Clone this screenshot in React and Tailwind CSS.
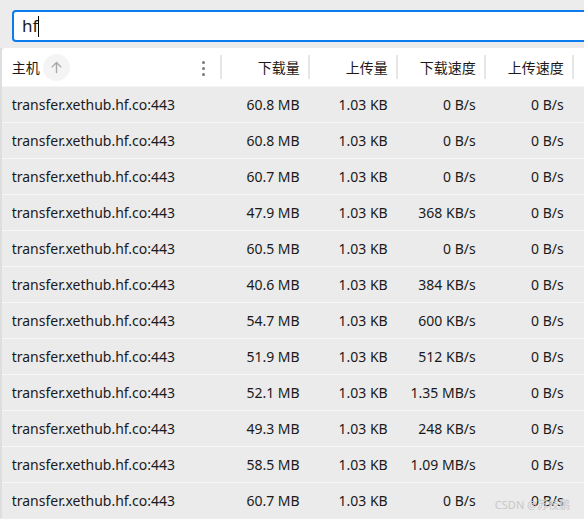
import React from 'react';

const rows = [
  ['60.8 MB', '1.03 KB', '0 B/s', '0 B/s'],
  ['60.8 MB', '1.03 KB', '0 B/s', '0 B/s'],
  ['60.7 MB', '1.03 KB', '0 B/s', '0 B/s'],
  ['47.9 MB', '1.03 KB', '368 KB/s', '0 B/s'],
  ['60.5 MB', '1.03 KB', '0 B/s', '0 B/s'],
  ['40.6 MB', '1.03 KB', '384 KB/s', '0 B/s'],
  ['54.7 MB', '1.03 KB', '600 KB/s', '0 B/s'],
  ['51.9 MB', '1.03 KB', '512 KB/s', '0 B/s'],
  ['52.1 MB', '1.03 KB', '1.35 MB/s', '0 B/s'],
  ['49.3 MB', '1.03 KB', '248 KB/s', '0 B/s'],
  ['58.5 MB', '1.03 KB', '1.09 MB/s', '0 B/s'],
  ['60.7 MB', '1.03 KB', '0 B/s', '0 B/s'],
];

const font = { fontFamily: '"Noto Sans", "Noto Sans CJK SC", sans-serif' };

const HeadCell = ({ children }) => (
  <div className="w-[88px] flex items-center justify-end pr-[10px] relative">
    {children}
    <span className="absolute right-0 top-[7px] bottom-[7px] w-[2px] bg-[#e6e6e6]" />
  </div>
);

export default function App() {
  return (
    <div className="w-[584px] h-[519px] overflow-hidden bg-[#ececec] relative text-[#1a1a1a]" style={font}>
      {/* search */}
      <div className="pt-[10px] pl-[12px]">
        <div className="w-[600px] h-[32px] border-2 border-[#0a7cf0] rounded-[4px] bg-white flex items-center pl-[8px] text-[17px]">
          <span>hf</span>
          <span className="w-px h-[21px] bg-black" />
        </div>
      </div>

      {/* table */}
      <div className="mt-[6px] flex">
        <div className="w-[2px] bg-[#dedede]" />
        <div className="w-[700px]">
          <div className="h-[38px] bg-white rounded-tl-[4px] flex text-[14px]">
            <div className="w-[220px] flex items-center pl-[10px] relative">
              <span>主机</span>
              <span className="ml-[3px] w-[27px] h-[27px] rounded-full bg-[#f4f4f4] flex items-center justify-center">
                <svg width="15" height="15" viewBox="0 0 24 24" fill="none" stroke="#a8a8a8" strokeWidth="2.2" strokeLinecap="round">
                  <path d="M12 20V4M5 11l7-7 7 7" />
                </svg>
              </span>
              <span className="absolute left-[200px] top-[13px] flex flex-col gap-[3px]">
                <span className="w-[3px] h-[3px] rounded-full bg-[#7a7a7a]" />
                <span className="w-[3px] h-[3px] rounded-full bg-[#7a7a7a]" />
                <span className="w-[3px] h-[3px] rounded-full bg-[#7a7a7a]" />
              </span>
              <span className="absolute right-0 top-[7px] bottom-[7px] w-[2px] bg-[#e6e6e6]" />
            </div>
            <HeadCell>下载量</HeadCell>
            <HeadCell>上传量</HeadCell>
            <HeadCell>下载速度</HeadCell>
            <HeadCell>上传速度</HeadCell>
          </div>
          {rows.map((r, i) => (
            <div key={i} className="h-[36px] flex bg-[#ebebeb] border-t border-[#f6f6f6] text-[14px]">
              <div className="w-[220px] flex items-center pl-[10px]">transfer.xethub.hf.co:443</div>
              {r.map((c, j) => (
                <div key={j} className="w-[88px] flex items-center justify-end pr-[10px]">{c}</div>
              ))}
            </div>
          ))}
        </div>
      </div>

      <div className="absolute right-[14px] bottom-[6px] text-[11px] text-[#c8c8c8]">CSDN @苏枝鹏</div>
    </div>
  );
}
